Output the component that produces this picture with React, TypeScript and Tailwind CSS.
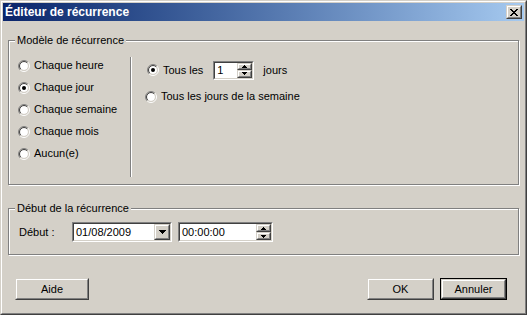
import React from "react";

const FONT = { fontFamily: '"Liberation Sans", Arial, sans-serif' };

function Radio({ checked }: { checked?: boolean }) {
  const arc = (r: number) => {
    const d = 0.7071 * r;
    return {
      tl: `M ${6 - d} ${6 + d} A ${r} ${r} 0 0 1 ${6 + d} ${6 - d}`,
      br: `M ${6 + d} ${6 - d} A ${r} ${r} 0 0 1 ${6 - d} ${6 + d}`,
    };
  };
  const o = arc(5.5);
  const i = arc(4.5);
  return (
    <svg width="12" height="12" viewBox="0 0 12 12" className="shrink-0">
      <circle cx="6" cy="6" r="4" fill="#fff" />
      <path d={o.tl} stroke="#808080" strokeWidth="1" fill="none" />
      <path d={o.br} stroke="#fff" strokeWidth="1" fill="none" />
      <path d={i.tl} stroke="#404040" strokeWidth="1" fill="none" />
      <path d={i.br} stroke="#D4D0C8" strokeWidth="1" fill="none" />
      {checked && <circle cx="6" cy="6" r="2" fill="#000" />}
    </svg>
  );
}

function RadioRow({ label, checked }: { label: string; checked?: boolean }) {
  return (
    <div className="flex items-center gap-[4px] h-[13px]">
      <Radio checked={checked} />
      <span className="leading-[13px]">{label}</span>
    </div>
  );
}

function GroupBox({
  title,
  className,
  children,
}: {
  title: string;
  className?: string;
  children: React.ReactNode;
}) {
  return (
    <div
      className={
        "relative border border-[#808080] shadow-[1px_1px_0_#fff,inset_1px_1px_0_#fff] " +
        (className ?? "")
      }
    >
      <span className="absolute left-[6px] top-[-7px] bg-[#D4D0C8] px-[2px] leading-[13px]">
        {title}
      </span>
      {children}
    </div>
  );
}

function Sunken({ className, children }: { className?: string; children: React.ReactNode }) {
  return (
    <div className={"border border-t-[#808080] border-l-[#808080] border-r-white border-b-white " + (className ?? "")}>
      <div className="h-full border border-t-[#404040] border-l-[#404040] border-r-[#D4D0C8] border-b-[#D4D0C8] bg-white flex items-center">
        {children}
      </div>
    </div>
  );
}

function Raised({ className, children }: { className?: string; children?: React.ReactNode }) {
  return (
    <div className={"border border-t-[#D4D0C8] border-l-[#D4D0C8] border-r-[#404040] border-b-[#404040] bg-[#D4D0C8] " + (className ?? "")}>
      <div className="h-full w-full border border-t-white border-l-white border-r-[#808080] border-b-[#808080] flex items-center justify-center">
        {children}
      </div>
    </div>
  );
}

function Tri({ up }: { up?: boolean }) {
  return (
    <svg width="5" height="3" viewBox="0 0 5 3" shapeRendering="crispEdges">
      {up ? (
        <path d="M2 0h1v1h1v1h1v1H0V2h1V1h1z" fill="#000" />
      ) : (
        <path d="M0 0h5v1H4v1H3v1H2V2H1V1H0z" fill="#000" />
      )}
    </svg>
  );
}

function Spin({ className }: { className?: string }) {
  return (
    <div className={"flex flex-col shrink-0 " + (className ?? "")}>
      <Raised className="h-1/2 w-full">
        <Tri up />
      </Raised>
      <Raised className="h-1/2 w-full">
        <Tri />
      </Raised>
    </div>
  );
}

function Button({ label, def, className }: { label: string; def?: boolean; className?: string }) {
  const inner = (
    <Raised className="w-full h-full">
      <span className="leading-[13px]">{label}</span>
    </Raised>
  );
  return def ? (
    <div className={"border border-black " + (className ?? "")}>{inner}</div>
  ) : (
    <div className={className}>{inner}</div>
  );
}

export default function App() {
  return (
    <div
      style={FONT}
      className="w-[527px] h-[315px] bg-[#D4D0C8] text-[11px] text-black border border-t-[#D4D0C8] border-l-[#D4D0C8] border-r-[#404040] border-b-[#404040]"
    >
      <div className="h-full border border-t-white border-l-white border-r-[#808080] border-b-[#808080] p-[1px] flex flex-col">
        {/* title bar */}
        <div className="h-[18px] flex items-center justify-between pl-[2px] pr-[2px] bg-gradient-to-r from-[#0A246A] to-[#A6CAF0]">
          <span className="text-white font-bold text-[12px] leading-[14px]">Éditeur de récurrence</span>
          <Raised className="w-[16px] h-[14px]">
            <svg width="8" height="7" viewBox="0 0 8 7" shapeRendering="crispEdges">
              <path
                d="M0 0h2v1h1v1h2V1h1V0h2v1H7v1H6v1H5v1h1v1h1v1h1v1H6V6H5V5H3v1H2v1H0V6h1V5h1V4h1V3H2V2H1V1H0z"
                fill="#000"
              />
            </svg>
          </Raised>
        </div>

        <div className="flex-1 flex flex-col px-[5px] pt-[19px]">
          <GroupBox title="Modèle de récurrence" className="h-[145px]">
            <div className="flex pt-[18px] pl-[9px] h-full">
              <div className="flex flex-col gap-[9px] w-[112px]">
                <RadioRow label="Chaque heure" />
                <RadioRow label="Chaque jour" checked />
                <RadioRow label="Chaque semaine" />
                <RadioRow label="Chaque mois" />
                <RadioRow label="Aucun(e)" />
              </div>
              <div className="w-[2px] h-[120px] -mt-[2px] border-l border-l-[#808080] border-r border-r-white" />
              <div className="flex flex-col pl-[13px] pt-[2px]">
                <div className="flex items-center pl-[2px] h-[18px]">
                  <Radio checked />
                  <span className="ml-[4px]">Tous les</span>
                  <Sunken className="ml-[10px] w-[41px] h-[19px]">
                    <span className="pl-[2px] flex-1">1</span>
                    <Spin className="w-[15px] h-full" />
                  </Sunken>
                  <span className="ml-[9px]">jours</span>
                </div>
                <div className="mt-[11px]">
                  <RadioRow label="Tous les jours de la semaine" />
                </div>
              </div>
            </div>
          </GroupBox>

          <GroupBox title="Début de la récurrence" className="mt-[23px] h-[47px]">
            <div className="flex items-center pl-[10px] pt-[13px]">
              <span className="w-[53px]">Début :</span>
              <Sunken className="w-[100px] h-[20px]">
                <span className="pl-[2px] flex-1">01/08/2009</span>
                <Raised className="w-[16px] h-full">
                  <svg width="7" height="4" viewBox="0 0 7 4" shapeRendering="crispEdges">
                    <path d="M0 0h7v1H6v1H5v1H4v1H3V3H2V2H1V1H0z" fill="#000" />
                  </svg>
                </Raised>
              </Sunken>
              <Sunken className="ml-[6px] w-[95px] h-[20px]">
                <span className="pl-[2px] flex-1">00:00:00</span>
                <Spin className="w-[15px] h-full" />
              </Sunken>
            </div>
          </GroupBox>

          <div className="flex items-center mt-[23px] pl-[7px] pr-[12px]">
            <Button label="Aide" className="w-[74px] h-[22px]" />
            <div className="flex-1" />
            <Button label="OK" className="w-[67px] h-[22px]" />
            <Button label="Annuler" def className="ml-[6px] w-[67px] h-[22px]" />
          </div>
        </div>
      </div>
    </div>
  );
}
